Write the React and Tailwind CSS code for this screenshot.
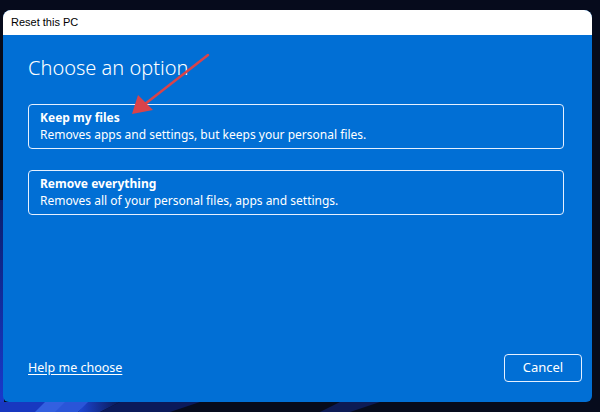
export default function App() {
  const font = { fontFamily: '"Noto Sans", "Open Sans", sans-serif' };
  return (
    <div className="relative w-[600px] h-[412px] overflow-hidden bg-[#060b1c]" style={font}>
      <svg className="absolute inset-0" width="600" height="412" viewBox="0 0 600 412">
        <defs>
          <linearGradient id="lft" x1="0" y1="0" x2="0" y2="1">
            <stop offset="0" stopColor="#0a1f6e" />
            <stop offset="1" stopColor="#1a3bd0" />
          </linearGradient>
          <linearGradient id="st" x1="0" y1="0" x2="1" y2="0">
            <stop offset="0" stopColor="#1d47d8" />
            <stop offset="1" stopColor="#0a1850" />
          </linearGradient>
        </defs>
        <rect x="0" y="200" width="4" height="212" fill="url(#lft)" />
        <polygon points="0,402 60,402 40,412 0,412" fill="#1838c0" />
        <polygon points="45,402 70,402 58,412 35,412" fill="#3360e0" />
        <polygon points="65,402 90,402 78,412 55,412" fill="#2a55d8" />
        <polygon points="88,402 120,402 100,412 78,412" fill="url(#st)" />
        <polygon points="120,402 200,402 170,412 100,412" fill="#0b1a5a" />
        <polygon points="340,402 380,402 350,412 320,412" fill="#0d1b55" />
      </svg>
      <div className="absolute left-[3px] top-[10px] w-[589px] h-[392px] flex flex-col rounded-t-[8px] rounded-b-[6px] overflow-hidden bg-[#016fd5]">
        <div className="h-[25px] bg-white flex items-center pl-[8px] text-[11px] text-black shrink-0" style={{ fontFamily: '"Liberation Sans", Arial, sans-serif' }}>
          Reset this PC
        </div>
        <div className="flex-1 flex flex-col pl-[25px] pr-[28px] pt-[19px] pb-[20px] text-white">
          <div className="text-[20px] font-light leading-[28px] h-[28px]">Choose an option</div>
          <div className="mt-[22px] h-[45px] border-[1.5px] border-[#e6f0ff] rounded-[4px] flex flex-col justify-center pl-[11px]">
            <div className="text-[12px] font-bold leading-[16px]">Keep my files</div>
            <div className="text-[12px] leading-[17px]">Removes apps and settings, but keeps your personal files.</div>
          </div>
          <div className="mt-[21px] h-[45px] border-[1.5px] border-[#e6f0ff] rounded-[4px] flex flex-col justify-center pl-[11px]">
            <div className="text-[12px] font-bold leading-[16px]">Remove everything</div>
            <div className="text-[12px] leading-[17px]">Removes all of your personal files, apps and settings.</div>
          </div>
          <div className="flex-1" />
          <div className="flex items-center justify-between">
            <span className="text-[12.5px] underline underline-offset-2">Help me choose</span>
            <div className="w-[78px] h-[28px] border-[1.5px] border-[#e6f0ff] rounded-[4px] flex items-center justify-center text-[13px] -mr-[18px]">
              Cancel
            </div>
          </div>
        </div>
      </div>
      <svg className="absolute inset-0 pointer-events-none" width="600" height="412" viewBox="0 0 600 412">
        <line x1="208" y1="55" x2="145" y2="104" stroke="#d9434a" strokeWidth="2.5" strokeLinecap="round" />
        <polygon points="132,114 138,95 153,110" fill="#d9434a" />
      </svg>
    </div>
  );
}
